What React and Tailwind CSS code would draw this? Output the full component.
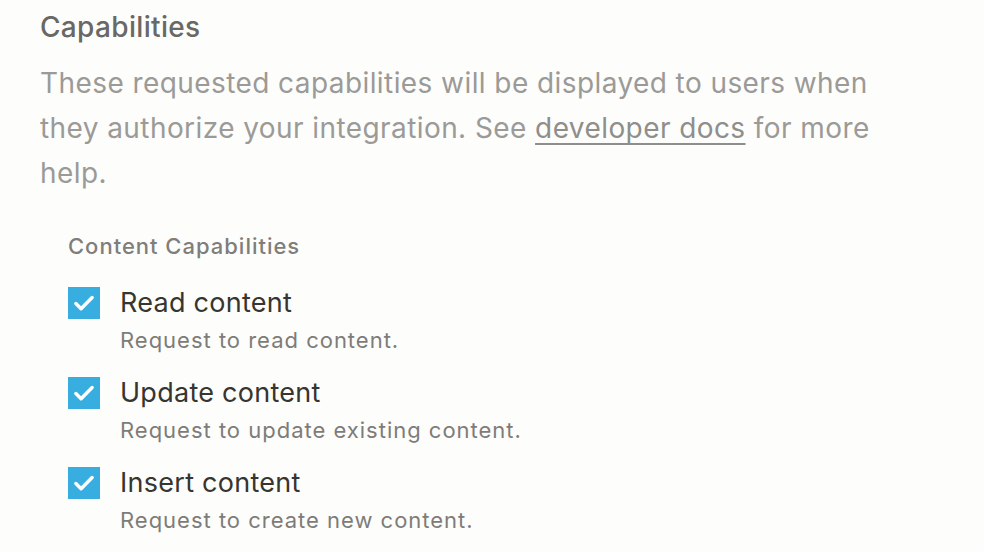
import React from 'react';

const items = [
  { title: 'Read content', desc: 'Request to read content.' },
  { title: 'Update content', desc: 'Request to update existing content.' },
  { title: 'Insert content', desc: 'Request to create new content.' },
];

const CheckBox = () => (
  <div className="w-8 h-8 bg-[#38aee0] flex items-center justify-center shrink-0">
    <svg width="26" height="26" viewBox="0 0 24 24" fill="none">
      <path d="M4.5 12.5l4.8 4.8L19.5 7" stroke="white" strokeWidth="3.2" strokeLinecap="round" strokeLinejoin="round" />
    </svg>
  </div>
);

export default function App() {
  return (
    <div
      className="w-[984px] h-[552px] bg-[#fdfdfc] pl-10 pt-[8px] overflow-hidden"
      style={{ fontFamily: 'Inter, "Noto Sans", sans-serif' }}
    >
      <h2 className="text-[28px] leading-[38px] font-medium tracking-[0.012em] text-[#696864]">Capabilities</h2>
      <p className="mt-[15px] w-[880px] text-[28px] leading-[45px] tracking-[0.015em] text-[#9b9a97]">
        These requested capabilities will be displayed to users when they authorize your integration. See{' '}
        <span className="underline decoration-[2px] underline-offset-[5px] [text-decoration-skip-ink:none] text-[#8f8e8b]">developer docs</span> for more help.
      </p>
      <div className="pl-7 mt-[37px]">
        <div className="text-[22px] leading-[26px] font-medium tracking-[0.045em] text-[#7f7e7a]">Content Capabilities</div>
        <div className="mt-[28px] flex flex-col gap-[22px]">
          {items.map((it) => (
            <div key={it.title} className="flex gap-5">
              <CheckBox />
              <div className="flex flex-col">
                <div className="text-[27px] leading-[32px] tracking-[0.01em] text-[#37352f]">{it.title}</div>
                <div className="mt-[6px] text-[22px] leading-[30px] tracking-[0.045em] text-[#7d7c78]">{it.desc}</div>
              </div>
            </div>
          ))}
        </div>
      </div>
    </div>
  );
}
